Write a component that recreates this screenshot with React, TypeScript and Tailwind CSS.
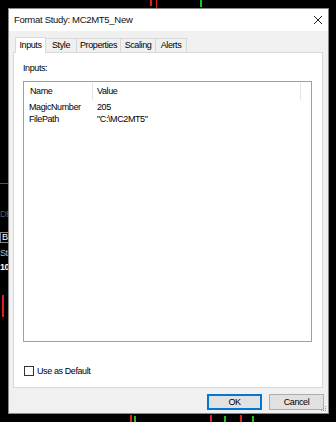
import React from "react";

const font = { fontFamily: '"Liberation Sans", Arial, sans-serif' };

const tabs = ["Inputs", "Style", "Properties", "Scaling", "Alerts"];
const tabWidths = ["w-[31px]", "w-[31px]", "w-[44px]", "w-[35px]", "w-[31px]"];

const rows = [
  { name: "MagicNumber", value: "205" },
  { name: "FilePath", value: '"C:\\MC2MT5"' },
];

const App = () => {
  return (
    <div
      className="relative w-[336px] h-[422px] bg-black overflow-hidden pl-[8px] pt-[8px] text-[9px] tracking-[-0.4px] leading-none text-black"
      style={font}
    >
      {/* bits of the chart behind the dialog */}
      <div className="absolute left-[150px] top-0 w-[2px] h-[6px] bg-[#e02020]" />
      <div className="absolute left-[156px] top-0 w-[1px] h-[8px] bg-[#e02020]" />
      <div className="absolute left-[200px] top-0 w-[2px] h-[7px] bg-[#20c020]" />
      <div className="absolute left-[0px] top-[183px] w-[8px] h-[1px] bg-[#d02020]" />
      <div className="absolute left-[0px] top-[210px] text-[9px] text-[#555]">DE</div>
      <div className="absolute left-[0px] top-[232px] h-[11px] px-[1px] border border-[#888] text-[9px] text-white">BF</div>
      <div className="absolute left-[0px] top-[249px] text-[9px] text-[#bbb]">St</div>
      <div className="absolute left-[0px] top-[263px] text-[9px] font-bold text-white">10</div>
      <div className="absolute left-[2px] top-[295px] w-[2px] h-[22px] bg-[#e02020]" />
      <div className="absolute left-[130px] top-[415px] w-[2px] h-[7px] bg-[#e02020]" />
      <div className="absolute left-[134px] top-[416px] w-[2px] h-[6px] bg-[#20c020]" />
      <div className="absolute left-[210px] top-[415px] w-[2px] h-[7px] bg-[#e02020]" />
      <div className="absolute left-[224px] top-[416px] w-[2px] h-[6px] bg-[#20c020]" />
      <div className="absolute left-[240px] top-[415px] w-[2px] h-[7px] bg-[#e02020]" />
      <div className="absolute left-[252px] top-[416px] w-[2px] h-[6px] bg-[#20c020]" />

      <div className="relative w-[321px] h-[406px] flex flex-col border border-[#8a8a8a] bg-[#f0f0f0]">
        {/* title bar */}
        <div className="h-[22px] bg-white flex items-center justify-between pl-[5px] pr-[5px]">
          <span className="text-[9.5px] tracking-[-0.3px] text-[#111]">Format Study: MC2MT5_New</span>
          <svg width="10" height="10" viewBox="0 0 10 10">
            <path d="M1 1 L9 9 M9 1 L1 9" stroke="#222" strokeWidth="1" />
          </svg>
        </div>

        {/* body */}
        <div className="flex-1 flex flex-col px-[4px] pt-[5px]">
          <div className="flex items-end h-[16px] pl-[2px]">
            {tabs.map((t, i) =>
              i === 0 ? (
                <div
                  key={t}
                  className={`${tabWidths[i]} h-[16px] bg-white border border-b-0 border-[#d9d9d9] flex items-center justify-center relative top-[1px] z-10`}
                >
                  {t}
                </div>
              ) : (
                <div
                  key={t}
                  className={`${tabWidths[i]} h-[14px] bg-[#f0f0f0] border border-l-0 border-b-0 border-[#d9d9d9] flex items-center justify-center`}
                >
                  {t}
                </div>
              )
            )}
          </div>

          {/* tab panel */}
          <div className="w-[310px] h-[336px] bg-white border border-[#d9d9d9] flex flex-col px-[9px] pt-[8px]">
            <div className="h-[14px] flex items-center">Inputs:</div>
            <div className="mt-[6px] w-[289px] h-[261px] border border-[#a0a0a0] flex flex-col">
              <div className="flex h-[19px] items-center">
                <div className="w-[69px] pl-[6px] h-[17px] flex items-center border-r border-[#e5e5e5]">
                  Name
                </div>
                <div className="w-[208px] pl-[4px] h-[17px] flex items-center border-r border-[#e5e5e5]">
                  Value
                </div>
              </div>
              <div className="flex flex-col">
                {rows.map((r) => (
                  <div key={r.name} className="flex h-[12px] items-center">
                    <div className="w-[69px] pl-[5px]">{r.name}</div>
                    <div className="pl-[4px]">{r.value}</div>
                  </div>
                ))}
              </div>
            </div>

            <div className="mt-[24px] flex items-center gap-[3px] ml-[1px]">
              <div className="w-[10px] h-[10px] border border-[#333] bg-white" />
              <span>Use as Default</span>
            </div>
          </div>

          {/* buttons */}
          <div className="flex justify-end gap-[7px] mt-[6px]">
            <button className="w-[55px] h-[16px] bg-[#e1e1e1] border-2 border-[#0078d7] flex items-center justify-center text-[9px]">
              OK
            </button>
            <button className="w-[55px] h-[16px] bg-[#e1e1e1] border border-[#adadad] flex items-center justify-center text-[9px]">
              Cancel
            </button>
          </div>
        </div>

        {/* resize grip */}
        <svg width="6" height="6" viewBox="0 0 6 6" className="absolute right-[1px] bottom-[1px]">
          <rect x="4" y="0" width="1" height="1" fill="#999" />
          <rect x="2" y="2" width="1" height="1" fill="#999" />
          <rect x="4" y="2" width="1" height="1" fill="#999" />
          <rect x="0" y="4" width="1" height="1" fill="#999" />
          <rect x="2" y="4" width="1" height="1" fill="#999" />
          <rect x="4" y="4" width="1" height="1" fill="#999" />
        </svg>
      </div>
    </div>
  );
};

export default App;
